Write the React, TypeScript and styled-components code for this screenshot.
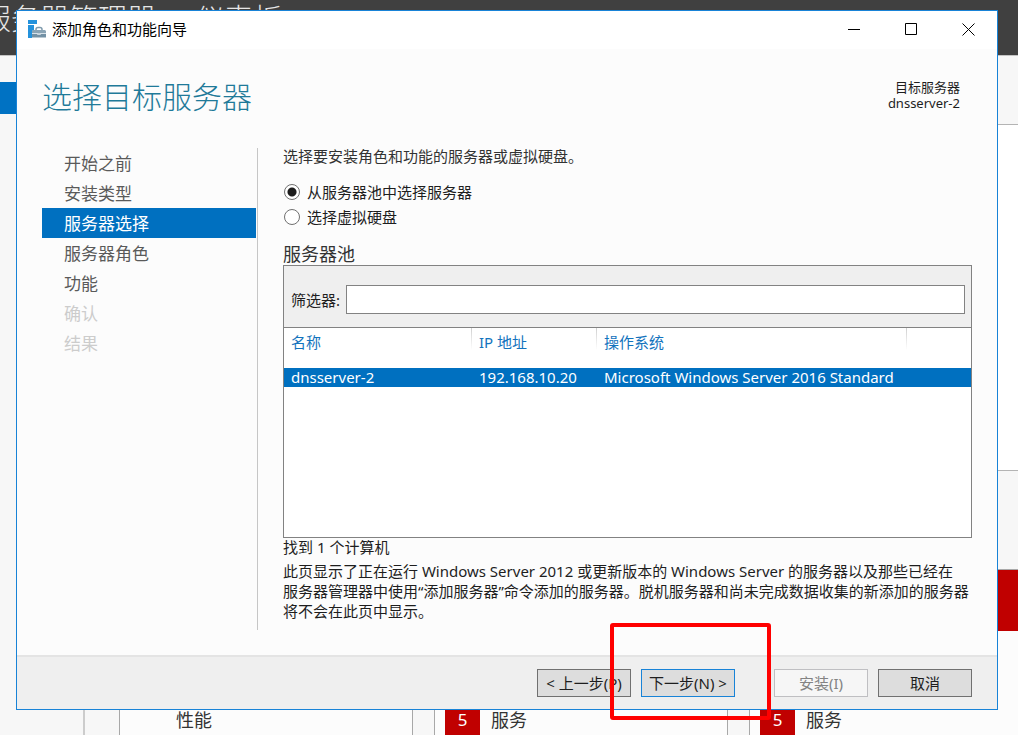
import React, { useState } from "react";
import styled, { createGlobalStyle } from "styled-components";

const GlobalStyle = createGlobalStyle`
  *, *::before, *::after { box-sizing: border-box; }
  body {
    margin: 0;
    font-family: "Noto Sans", "Noto Sans CJK SC", sans-serif;
    font-size: 15px;
    line-height: 20px;
    color: #1e1e1e;
  }
  button, input { font: inherit; color: inherit; }
`;

/* ---------- Server manager behind the wizard ---------- */

const Desktop = styled.div`
  position: relative;
  display: flex;
  flex-direction: column;
  height: 100vh;
  min-height: 735px;
  overflow: hidden;
  background: #f7f7f7;
`;

const ManagerHeader = styled.header`
  display: flex;
  gap: 16px;
  height: 56px;
  flex: none;
  margin-left: -18px;
  border-bottom: 1px solid #c4c4c4;
  background: #404040;
  color: #e6e6e6;
  font-size: 29px;
  font-weight: 300;
  line-height: 38px;
  white-space: nowrap;
`;

const ManagerBody = styled.div`
  display: flex;
  flex: 1;
  min-height: 0;
`;

const ManagerNav = styled.nav`
  width: 85px;
  flex: none;
  padding-top: 26px;
  border-right: 2px solid #cccccc;
`;

const ManagerNavMarker = styled.div`
  height: 32px;
  background: #0072c3;
`;

const Dashboard = styled.main`
  display: flex;
  flex: 1;
  flex-direction: column;
  min-width: 0;
  padding: 68px 0 0 34px;
`;

const WelcomePanel = styled.section`
  height: 347px;
  flex: none;
  border: 1px solid #b4b4b4;
  border-right: 0;
  background: #ffffff;
`;

const TileGrid = styled.section`
  display: grid;
  flex: 1;
  grid-template-columns: 294px 294px minmax(0, 1fr);
  gap: 21px;
  margin-top: 98px;
`;

const Tile = styled.article`
  display: flex;
  flex-direction: column;
  border: 1px solid #a8a8a8;
  border-bottom: 0;
  background: #fcfcfc;

  &:last-child { border-right: 0; }
`;

const TileHead = styled.div<{ $alert?: boolean }>`
  height: 61px;
  margin-bottom: 74px;
  background: ${(p) => (p.$alert ? "#c00000" : "#fcfcfc")};
`;

const TileRow = styled.div`
  display: flex;
  align-items: center;
  gap: 11px;
  height: 30px;
  padding-left: 10px;
  color: #333333;
  font-size: 18px;
`;

const Count = styled.span<{ $alert?: boolean }>`
  width: 35px;
  line-height: 30px;
  background: ${(p) => (p.$alert ? "#c00000" : "transparent")};
  color: #ffffff;
  font-size: 17px;
  text-align: center;
`;

/* ---------- Wizard window ---------- */

const Dialog = styled.section`
  position: absolute;
  top: 10px;
  right: 20px;
  left: 16px;
  border: 1px solid #1883d7;
  background: #fcfcfc;
`;

const TitleBar = styled.header`
  display: flex;
  align-items: center;
  height: 38px;
  padding: 0 0 2px 10px;
  background: #ffffff;
  color: #000000;
`;

const AppTitle = styled.span`
  flex: 1;
  margin-left: 5px;
`;

const WindowButton = styled.button`
  display: flex;
  align-items: center;
  justify-content: center;
  width: 57px;
  height: 36px;
  padding: 0;
  border: 0;
  background: transparent;
`;

const PageHead = styled.div`
  display: flex;
  justify-content: space-between;
  height: 99px;
  padding: 26px 37px 0 25px;
`;

const PageTitle = styled.h1`
  margin: 0;
  color: #1f7a99;
  font-size: 30px;
  font-weight: 300;
  line-height: 44px;
`;

const Destination = styled.div`
  padding-top: 4px;
  font-size: 13px;
  line-height: 16px;
  text-align: right;
`;

const Body = styled.div`
  display: flex;
  padding: 0 25px;
`;

const Steps = styled.nav`
  width: 216px;
  flex: none;
  padding-right: 1px;
  border-right: 1px solid #c6c6c6;
`;

const StepList = styled.ol`
  margin: 0;
  padding: 0;
  list-style: none;
`;

const StepLink = styled.a<{ $state: "open" | "current" | "disabled" }>`
  display: block;
  padding: 2px 0 0 22px;
  background: ${(p) => (p.$state === "current" ? "#0070c0" : "transparent")};
  color: ${(p) => ({ open: "#5a5a5a", current: "#ffffff", disabled: "#cccccc" })[p.$state]};
  font-size: 17px;
  line-height: 28px;
  text-decoration: none;
`;

const Content = styled.div`
  flex: 1;
  min-width: 0;
  min-height: 482px;
  padding-left: 25px;
`;

const Intro = styled.p`
  margin: 0 0 15px;
  color: #333333;
  line-height: 16px;
`;

const Choice = styled.label`
  display: flex;
  align-items: center;
  gap: 7px;
  width: max-content;
  height: 25px;
`;

const Radio = styled.input`
  appearance: none;
  width: 16px;
  height: 16px;
  margin: 0 0 0 1px;
  border: 1px solid #707070;
  border-radius: 50%;
  background: #ffffff;

  &:checked {
    background: radial-gradient(circle, #1c1c1c 4px, #ffffff 5px);
  }
`;

const PoolTitle = styled.h2`
  margin: 14px 0 0;
  color: #333333;
  font-size: 18px;
  font-weight: 400;
  line-height: 22px;
`;

const Pool = styled.section`
  min-height: 273px;
  border: 1px solid #828282;
  background: #ffffff;
`;

const FilterBar = styled.div`
  display: flex;
  align-items: center;
  gap: 6px;
  height: 62px;
  padding: 6px 6px 0 7px;
  border-bottom: 1px solid #828282;
  background: #efefef;
`;

const FilterLabel = styled.label`
  flex: none;
`;

const FilterInput = styled.input`
  flex: 1;
  min-width: 0;
  height: 29px;
  border: 1px solid #828282;
  background: #ffffff;
`;

const ServerTable = styled.table`
  width: 100%;
  border-collapse: collapse;
  table-layout: fixed;
`;

const HeadCell = styled.th<{ $width?: number }>`
  width: ${(p) => (p.$width ? `${p.$width}px` : "auto")};
  height: 40px;
  padding: 4px 0 0 7px;
  background: linear-gradient(#d0d0d0, #ffffff) right top / 1px 22px no-repeat;
  color: #1373bd;
  font-weight: 400;
  text-align: left;
  vertical-align: top;

  &:last-child { background: none; }
`;

const ServerRow = styled.tr`
  background: #0070c0;
  color: #ffffff;
`;

const Cell = styled.td`
  height: 19px;
  padding: 0 0 1px 7px;
  line-height: 18px;
  white-space: nowrap;
`;

const Found = styled.p`
  margin: 0 0 5px;
  line-height: 18px;
`;

const Note = styled.p`
  margin: 0;
`;

const Footer = styled.footer`
  display: flex;
  align-items: flex-start;
  gap: 10px;
  height: 54px;
  justify-content: flex-end;
  margin-top: 25px;
  padding: 12px 25px 0;
  border-top: 2px solid #e4e4e4;
  background: #efefef;
`;

const ActionButton = styled.button<{ $primary?: boolean }>`
  display: block;
  width: 94px;
  height: 28px;
  padding: 0;
  border: 1px solid ${(p) => (p.$primary ? "#1883d7" : "#707070")};
  background: #dddddd;
  white-space: nowrap;

  &:disabled {
    border-color: #bfbfc2;
    background: #f6f6f6;
    color: #838383;
  }
`;

const NextSlot = styled.div`
  position: relative;
  margin-right: 29px;
`;

const Highlight = styled.div`
  position: absolute;
  z-index: 1;
  inset: -46px -36px -23px -31px;
  border: 4px solid #ff0000;
  border-radius: 3px;
  pointer-events: none;
`;

const WizardIcon = () => (
  <svg width="20" height="20" viewBox="0 0 20 20" aria-hidden="true">
    <path d="M1 1h9v4H1z" fill="#2492dc" />
    <path d="M1 6h6v5l-2 1v7H1z" fill="#2492dc" />
    <path d="M9 11.500V10.500Q9 8.500 11 8.500h2Q15 8.500 15 10.500v1" fill="none" stroke="#7f9bad" strokeWidth="1.500" />
    <path d="M6 11h12l1 1v2.500H5V12z" fill="#8aa4b5" />
    <path d="M5 15h14v3.500H5z" fill="#7391a5" />
    <path d="M5 14.500h5.500v1h3v-1H19" fill="none" stroke="#dde6ec" strokeWidth=".8" />
  </svg>
);

type Step = { label: string; state: "open" | "current" | "disabled" };

const steps: Step[] = [
  { label: "开始之前", state: "open" },
  { label: "安装类型", state: "open" },
  { label: "服务器选择", state: "current" },
  { label: "服务器角色", state: "open" },
  { label: "功能", state: "open" },
  { label: "确认", state: "disabled" },
  { label: "结果", state: "disabled" },
];

const tiles = [
  { label: "性能", alert: false },
  { label: "服务", count: 5, alert: false },
  { label: "服务", count: 5, alert: true },
];

export default function App() {
  const [source, setSource] = useState("pool");
  const [filter, setFilter] = useState("");

  return (
    <>
      <GlobalStyle />
      <Desktop>
        <ManagerHeader>
          <span>服务器管理器</span>
          <span>·</span>
          <span>仪表板</span>
        </ManagerHeader>
        <ManagerBody>
          <ManagerNav>
            <ManagerNavMarker />
          </ManagerNav>
          <Dashboard>
            <WelcomePanel />
            <TileGrid>
              {tiles.map((tile, i) => (
                <Tile key={i}>
                  <TileHead $alert={tile.alert} />
                  <TileRow>
                    <Count $alert={tile.count !== undefined}>{tile.count}</Count>
                    <span>{tile.label}</span>
                  </TileRow>
                </Tile>
              ))}
            </TileGrid>
          </Dashboard>
        </ManagerBody>

        <Dialog role="dialog" aria-labelledby="wizard-title">
          <TitleBar>
            <WizardIcon />
            <AppTitle id="wizard-title">添加角色和功能向导</AppTitle>
            <WindowButton aria-label="最小化">
              <svg width="13" height="13" viewBox="0 0 13 13">
                <path d="M0 6.500h12" stroke="#000" />
              </svg>
            </WindowButton>
            <WindowButton aria-label="最大化">
              <svg width="13" height="13" viewBox="0 0 13 13">
                <path d="M.5 .5h11v11H.5z" fill="none" stroke="#000" />
              </svg>
            </WindowButton>
            <WindowButton aria-label="关闭">
              <svg width="13" height="13" viewBox="0 0 13 13">
                <path d="M.5 .5l12 12M12.500 .5l-12 12" stroke="#000" />
              </svg>
            </WindowButton>
          </TitleBar>

          <PageHead>
            <PageTitle>选择目标服务器</PageTitle>
            <Destination>
              <div>目标服务器</div>
              <div>dnsserver-2</div>
            </Destination>
          </PageHead>

          <Body>
            <Steps>
              <StepList>
                {steps.map((step) => (
                  <li key={step.label}>
                    <StepLink
                      href="#"
                      $state={step.state}
                      aria-current={step.state === "current" ? "step" : undefined}
                      aria-disabled={step.state === "disabled"}
                    >
                      {step.label}
                    </StepLink>
                  </li>
                ))}
              </StepList>
            </Steps>

            <Content>
              <Intro>选择要安装角色和功能的服务器或虚拟硬盘。</Intro>
              <Choice>
                <Radio
                  type="radio"
                  name="source"
                  checked={source === "pool"}
                  onChange={() => setSource("pool")}
                />
                从服务器池中选择服务器
              </Choice>
              <Choice>
                <Radio
                  type="radio"
                  name="source"
                  checked={source === "disk"}
                  onChange={() => setSource("disk")}
                />
                选择虚拟硬盘
              </Choice>

              <PoolTitle>服务器池</PoolTitle>
              <Pool>
                <FilterBar>
                  <FilterLabel htmlFor="filter">筛选器:</FilterLabel>
                  <FilterInput
                    id="filter"
                    type="text"
                    value={filter}
                    onChange={(e) => setFilter(e.target.value)}
                  />
                </FilterBar>
                <ServerTable>
                  <thead>
                    <tr>
                      <HeadCell $width={188}>名称</HeadCell>
                      <HeadCell $width={125}>IP 地址</HeadCell>
                      <HeadCell $width={310}>操作系统</HeadCell>
                      <HeadCell aria-hidden="true" />
                    </tr>
                  </thead>
                  <tbody>
                    <ServerRow>
                      <Cell>dnsserver-2</Cell>
                      <Cell>192.168.10.20</Cell>
                      <Cell>Microsoft Windows Server 2016 Standard</Cell>
                      <Cell />
                    </ServerRow>
                  </tbody>
                </ServerTable>
              </Pool>
              <Found>找到 1 个计算机</Found>
              <Note>
                此页显示了正在运行 Windows Server 2012 或更新版本的 Windows Server 的服务器以及那些已经在
                <br />
                服务器管理器中使用“添加服务器”命令添加的服务器。脱机服务器和尚未完成数据收集的新添加的服务器
                <br />
                将不会在此页中显示。
              </Note>
            </Content>
          </Body>

          <Footer>
            <ActionButton>&lt; 上一步(P)</ActionButton>
            <NextSlot>
              <ActionButton $primary>下一步(N) &gt;</ActionButton>
              <Highlight />
            </NextSlot>
            <ActionButton disabled>安装(I)</ActionButton>
            <ActionButton>取消</ActionButton>
          </Footer>
        </Dialog>
      </Desktop>
    </>
  );
}
